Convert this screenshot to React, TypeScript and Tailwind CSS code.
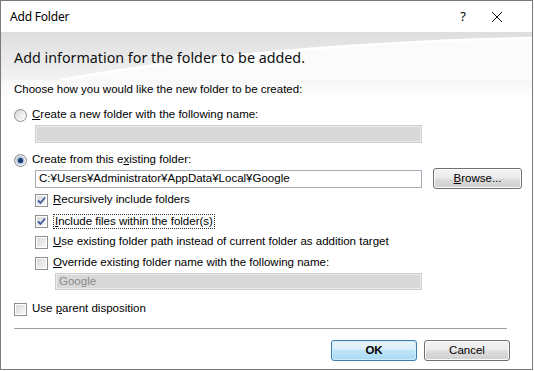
import React from "react";

const ui = { fontFamily: '"Liberation Sans", Arial, sans-serif' };
const seg = { fontFamily: '"Noto Sans", "Open Sans", sans-serif' };

function Radio({ checked }: { checked?: boolean }) {
  return (
    <span className="flex h-[13px] w-[13px] shrink-0 items-center justify-center rounded-full border border-[#8e8f8f] bg-gradient-to-br from-[#d4d4d4] via-[#ececec] to-[#ffffff]">
      {checked && (
        <span className="h-[5px] w-[5px] rounded-full bg-[#1b3a6e] shadow-[0_0_2px_1px_#7fa2d6]" />
      )}
    </span>
  );
}

function Check({ checked }: { checked?: boolean }) {
  return (
    <span className="flex h-[13px] w-[13px] shrink-0 items-center justify-center border border-[#8e8f8f] bg-white p-[1px]">
      <span className="flex h-full w-full items-center justify-center bg-gradient-to-br from-[#d8d8d8] to-[#f7f7f7]">
        {checked && (
          <svg width="9" height="9" viewBox="0 0 9 9">
            <path
              d="M1 4.5 L3.5 7 L8 1.5"
              fill="none"
              stroke="#3d5a9c"
              strokeWidth="1.8"
            />
          </svg>
        )}
      </span>
    </span>
  );
}

function WinButton({
  children,
  primary,
  className,
}: {
  children: React.ReactNode;
  primary?: boolean;
  className?: string;
}) {
  return (
    <div
      className={
        "flex h-[21px] items-center justify-center rounded-[3px] border text-[11.5px] " +
        (primary
          ? "border-[#3c7fb1] bg-[linear-gradient(#e8f4fb_0%,#d9eefa_45%,#bee4f8_50%,#a7d9f5_100%)] shadow-[inset_0_0_0_1px_#cfeaf9] "
          : "border-[#707070] bg-[linear-gradient(#f2f2f2_0%,#ebebeb_48%,#dddddd_52%,#cfcfcf_100%)] shadow-[inset_0_0_0_1px_#fcfcfc] ") +
        (className ?? "")
      }
      style={ui}
    >
      {children}
    </div>
  );
}

function Row({ children, indent }: { children: React.ReactNode; indent: string }) {
  return <div className={"flex h-[16px] items-center gap-[5px] " + indent}>{children}</div>;
}

export default function App() {
  return (
    <div className="h-[371px] w-[534px] bg-white">
      <div className="flex h-[370px] w-[533px] flex-col border border-[#7a7a7a] bg-white text-[11.5px] text-black">
        {/* title bar */}
        <div className="flex h-[31px] items-center justify-between pl-[9px] pr-[29px]" style={seg}>
          <span className="text-[12px] tracking-[-0.2px]">Add Folder</span>
          <div className="flex items-center gap-[25px]">
            <span className="text-[13px]">?</span>
            <svg width="12" height="12" viewBox="0 0 12 12">
              <path d="M1 1 L11 11 M11 1 L1 11" stroke="#111" strokeWidth="1" />
            </svg>
          </div>
        </div>

        {/* header band */}
        <div className="relative h-[48px]">
          <svg
            className="absolute inset-0 h-full w-full"
            viewBox="0 0 531 48"
            preserveAspectRatio="none"
          >
            <defs>
              <linearGradient id="hb" x1="0" y1="0" x2="0" y2="1">
                <stop offset="0" stopColor="#dedede" />
                <stop offset="1" stopColor="#f3f3f3" />
              </linearGradient>
            </defs>
            <rect width="531" height="48" fill="url(#hb)" />
            <path d="M60 48 Q 260 12 531 6 L531 48 Z" fill="#fbfbfb" />
            <path d="M60 48 Q 260 12 531 6" fill="none" stroke="#ffffff" strokeWidth="2.5" />
          </svg>
          <div className="relative pl-[13px] pt-[16px] text-[14.3px] leading-[20px] text-[#111]" style={seg}>
            Add information for the folder to be added.
          </div>
        </div>

        {/* body */}
        <div className="flex flex-1 flex-col bg-[linear-gradient(180deg,#f7f7f7_0px,#ffffff_20px)]" style={ui}>
          <div className="mt-[1px] h-[16px] pl-[13px] leading-[16px]">
            Choose how you would like the new folder to be created:
          </div>

          <Row indent="pl-[13px] mt-[10px]">
            <Radio />
            <span>
              <u>C</u>reate a new folder with the following name:
            </span>
          </Row>
          <div className="ml-[34px] mt-[2px] h-[18px] w-[387px] border border-[#cccccc] bg-[#d8d8d8] shadow-[inset_0_0_0_1px_#ededed]" />

          <Row indent="pl-[13px] mt-[9px]">
            <Radio checked />
            <span>
              Create from this e<u>x</u>isting folder:
            </span>
          </Row>
          <div className="ml-[34px] flex items-center">
            <div className="flex h-[18px] w-[387px] items-center border border-[#a4acb8] bg-white pl-[3px] leading-none">
              C:¥Users¥Administrator¥AppData¥Local¥Google
            </div>
            <WinButton className="ml-[11px] w-[89px]">
              <span>
                <u>B</u>rowse...
              </span>
            </WinButton>
          </div>

          <Row indent="pl-[34px] mt-[3px]">
            <Check checked />
            <span>
              <u>R</u>ecursively include folders
            </span>
          </Row>
          <Row indent="pl-[34px] mt-[5px]">
            <Check checked />
            <span className="border border-dotted border-[#333] px-[1px] leading-[13px]">
              <u>I</u>nclude files within the folder(s)
            </span>
          </Row>
          <Row indent="pl-[34px] mt-[5px]">
            <Check />
            <span>
              <u>U</u>se existing folder path instead of current folder as addition target
            </span>
          </Row>
          <Row indent="pl-[34px] mt-[5px]">
            <Check />
            <span>
              <u>O</u>verride existing folder name with the following name:
            </span>
          </Row>
          <div className="ml-[54px] mt-[2px] flex h-[17px] w-[367px] items-center border border-[#cccccc] bg-[#d8d8d8] pl-[3px] leading-none text-[#8a8a8a] shadow-[inset_0_0_0_1px_#ededed]">
            Google
          </div>

          <Row indent="pl-[13px] mt-[11px]">
            <Check />
            <span>
              Use <u>p</u>arent disposition
            </span>
          </Row>

          <div className="ml-[13px] mt-[11px] h-px w-[493px] bg-[#a0a0a0]" />

          <div className="mt-[11px] flex justify-end gap-[7px] pr-[22px]">
            <WinButton primary className="w-[86px] font-bold">
              OK
            </WinButton>
            <WinButton className="w-[86px]">Cancel</WinButton>
          </div>
        </div>
      </div>
    </div>
  );
}
